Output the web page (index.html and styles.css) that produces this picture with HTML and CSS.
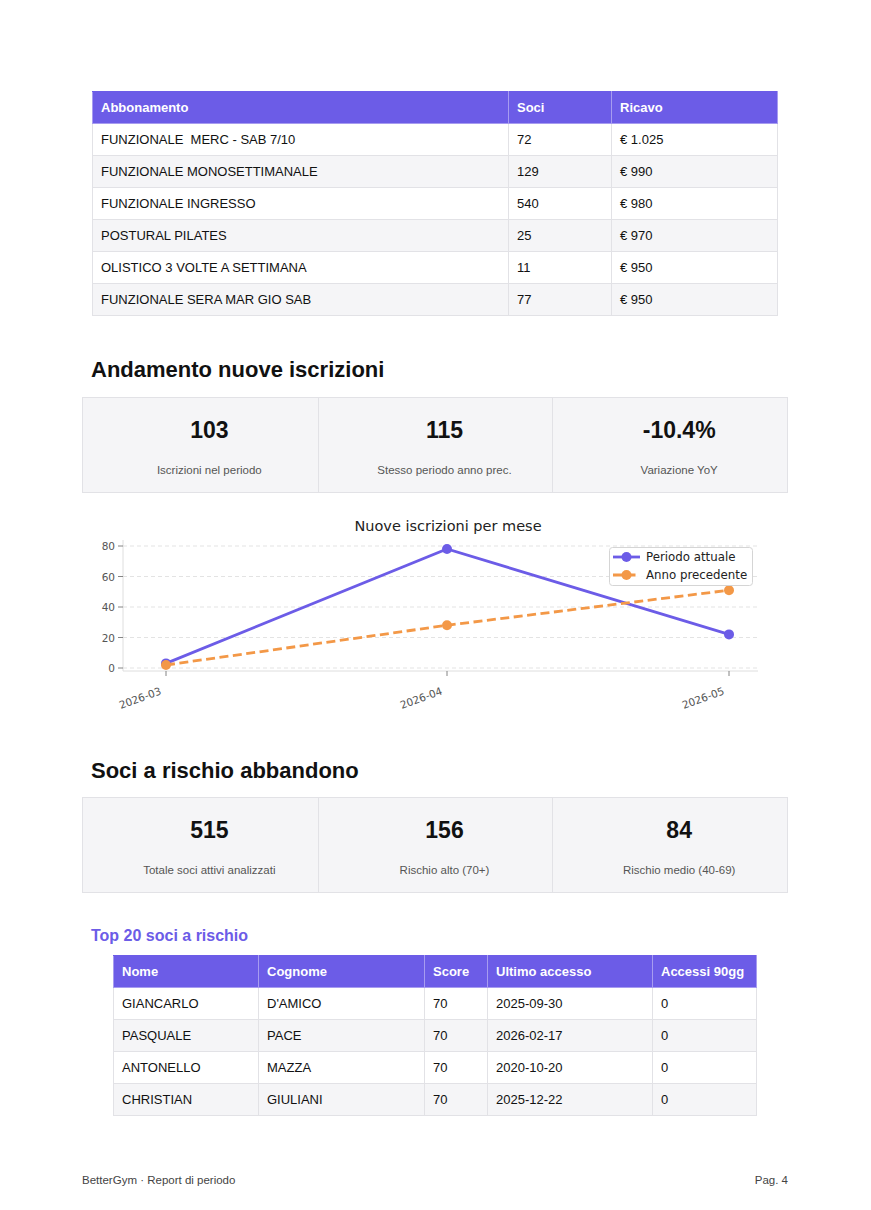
FILE: index.html
```html
<!DOCTYPE html>
<html lang="it">
<head>
<meta charset="utf-8">
<title>BetterGym - Report di periodo</title>
<link rel="stylesheet" href="styles.css">
</head>
<body>
<div class="page">
  <table class="data t1">
    <thead>
      <tr><th class="c-abb">Abbonamento</th><th class="c-soci">Soci</th><th>Ricavo</th></tr>
    </thead>
    <tbody>
      <tr><td>FUNZIONALE&nbsp; MERC - SAB 7/10</td><td>72</td><td>€ 1.025</td></tr>
      <tr><td>FUNZIONALE MONOSETTIMANALE</td><td>129</td><td>€ 990</td></tr>
      <tr><td>FUNZIONALE INGRESSO</td><td>540</td><td>€ 980</td></tr>
      <tr><td>POSTURAL PILATES</td><td>25</td><td>€ 970</td></tr>
      <tr><td>OLISTICO 3 VOLTE A SETTIMANA</td><td>11</td><td>€ 950</td></tr>
      <tr><td>FUNZIONALE SERA MAR GIO SAB</td><td>77</td><td>€ 950</td></tr>
    </tbody>
  </table>

  <h2 class="section-title first">Andamento nuove iscrizioni</h2>
  <div class="stats">
    <div class="stat"><div class="stat-value">103</div><div class="stat-label">Iscrizioni nel periodo</div></div>
    <div class="stat"><div class="stat-value">115</div><div class="stat-label">Stesso periodo anno prec.</div></div>
    <div class="stat"><div class="stat-value">-10.4%</div><div class="stat-label">Variazione YoY</div></div>
  </div>

  <svg class="chart" width="706" height="227" viewBox="82 503 706 227" xmlns="http://www.w3.org/2000/svg">
    <text x="448" y="531" class="ch-title" text-anchor="middle">Nuove iscrizioni per mese</text>
    <g class="grid">
      <line x1="123" y1="546" x2="758" y2="546"/>
      <line x1="123" y1="576.5" x2="758" y2="576.5"/>
      <line x1="123" y1="607" x2="758" y2="607"/>
      <line x1="123" y1="637.5" x2="758" y2="637.5"/>
      <line x1="123" y1="668" x2="758" y2="668"/>
    </g>
    <g class="spine">
      <line x1="123" y1="540" x2="123" y2="671"/>
      <line x1="123" y1="671" x2="758" y2="671"/>
    </g>
    <g class="ticks">
      <line x1="118" y1="546" x2="123" y2="546"/>
      <line x1="118" y1="576.5" x2="123" y2="576.5"/>
      <line x1="118" y1="607" x2="123" y2="607"/>
      <line x1="118" y1="637.5" x2="123" y2="637.5"/>
      <line x1="118" y1="668" x2="123" y2="668"/>
      <line x1="166" y1="671" x2="166" y2="676"/>
      <line x1="447" y1="671" x2="447" y2="676"/>
      <line x1="729" y1="671" x2="729" y2="676"/>
    </g>
    <g class="ytick" text-anchor="end">
      <text x="115" y="550">80</text>
      <text x="115" y="580.5">60</text>
      <text x="115" y="611">40</text>
      <text x="115" y="641.5">20</text>
      <text x="115" y="672">0</text>
    </g>
    <g class="xtick" text-anchor="end">
      <text transform="translate(162 694) rotate(-20)">2026-03</text>
      <text transform="translate(443 694) rotate(-20)">2026-04</text>
      <text transform="translate(725 694) rotate(-20)">2026-05</text>
    </g>
    <polyline class="l-cur" points="166,663.4 447,549 729,634.4"/>
    <g class="m-cur">
      <circle cx="166" cy="663.4" r="5"/>
      <circle cx="447" cy="549" r="5"/>
      <circle cx="729" cy="634.4" r="5"/>
    </g>
    <polyline class="l-prev" points="166,665 447,625.3 729,590.2"/>
    <g class="m-prev">
      <circle cx="166" cy="665" r="5"/>
      <circle cx="447" cy="625.3" r="5"/>
      <circle cx="729" cy="590.2" r="5"/>
    </g>
    <rect class="legend" x="609.5" y="547.5" width="143" height="38" rx="3"/>
    <line class="l-cur" x1="613" y1="557" x2="640" y2="557"/>
    <circle class="m-cur-one" cx="626.5" cy="557" r="5"/>
    <text class="lg" x="646" y="561">Periodo attuale</text>
    <line class="l-prev" x1="613" y1="575" x2="640" y2="575"/>
    <circle class="m-prev-one" cx="626.5" cy="575" r="5"/>
    <text class="lg" x="646" y="579">Anno precedente</text>
  </svg>

  <h2 class="section-title second">Soci a rischio abbandono</h2>
  <div class="stats">
    <div class="stat"><div class="stat-value">515</div><div class="stat-label">Totale soci attivi analizzati</div></div>
    <div class="stat"><div class="stat-value">156</div><div class="stat-label">Rischio alto (70+)</div></div>
    <div class="stat"><div class="stat-value">84</div><div class="stat-label">Rischio medio (40-69)</div></div>
  </div>

  <h3 class="sub-title">Top 20 soci a rischio</h3>
  <table class="data t2">
    <thead>
      <tr><th class="c-nome">Nome</th><th class="c-cog">Cognome</th><th class="c-score">Score</th><th class="c-ult">Ultimo accesso</th><th>Accessi 90gg</th></tr>
    </thead>
    <tbody>
      <tr><td>GIANCARLO</td><td>D'AMICO</td><td>70</td><td>2025-09-30</td><td>0</td></tr>
      <tr><td>PASQUALE</td><td>PACE</td><td>70</td><td>2026-02-17</td><td>0</td></tr>
      <tr><td>ANTONELLO</td><td>MAZZA</td><td>70</td><td>2020-10-20</td><td>0</td></tr>
      <tr><td>CHRISTIAN</td><td>GIULIANI</td><td>70</td><td>2025-12-22</td><td>0</td></tr>
    </tbody>
  </table>

  <footer class="footer">
    <span>BetterGym · Report di periodo</span>
    <span>Pag. 4</span>
  </footer>
</div>
</body>
</html>
```

FILE: styles.css
```css
* { box-sizing: border-box; }
html, body { margin: 0; padding: 0; background: #fff; }
body {
  font-family: "Liberation Sans", Arial, Helvetica, sans-serif;
  color: #111;
}
.page {
  width: 871px;
  padding: 91px 83px 0 82px;
  display: flex;
  flex-direction: column;
}
.data {
  border-collapse: collapse;
  align-self: center;
  font-size: 13px;
  table-layout: fixed;
}
.data th, .data td {
  text-align: left;
  padding: 8px 8px 8px 8px;
  line-height: 15px;
  border: 1px solid #e2e2e6;
  white-space: nowrap;
}
.data th {
  background: #6c5ce7;
  color: #fff;
  font-weight: bold;
  border-color: #a79cf0;
  border-top-color: #6c5ce7;
}
.data tbody tr:nth-child(even) td { background: #f5f5f7; }
.t1 { width: 686px; }
.t1 .c-abb { width: 416px; }
.t1 .c-soci { width: 103px; }
.t2 { width: 644px; }
.t2 .c-nome { width: 145px; }
.t2 .c-cog { width: 166px; }
.t2 .c-score { width: 63px; }
.t2 .c-ult { width: 165px; }

.section-title {
  font-size: 22px;
  line-height: 24px;
  font-weight: bold;
  margin: 0 0 15px 9px;
  color: #111;
}
.section-title.first { margin-top: 42px; }
.section-title.second { margin-top: 29px; margin-bottom: 14px; }

.stats {
  display: grid;
  grid-template-columns: 1fr 1fr 1fr;
  background: #f5f5f7;
  border: 1px solid #e2e2e6;
}
.stat {
  height: 94px;
  text-align: center;
  border-left: 1px solid #e2e2e6;
  padding: 19px 0 0 18px;
}
.stat:first-child { border-left: none; }
.stat-value {
  font-size: 23px;
  line-height: 26px;
  font-weight: bold;
  color: #111;
}
.stat-label {
  margin-top: 20px;
  font-size: 11.5px;
  line-height: 14px;
  color: #555;
}

.chart { display: block; margin-top: 10px; }
.ch-title { font-family: "DejaVu Sans", sans-serif; font-size: 14.5px; fill: #222; }
.grid line { stroke: #dcdcdc; stroke-width: 0.8; stroke-dasharray: 4 3; }
.spine line { stroke: #dedede; stroke-width: 1; }
.ticks line { stroke: #666; stroke-width: 0.8; }
.ytick text, .xtick text { font-family: "DejaVu Sans", sans-serif; font-size: 10.5px; fill: #555; }
.l-cur { fill: none; stroke: #6c5ce7; stroke-width: 2.8; }
.l-prev { fill: none; stroke: #f39847; stroke-width: 2.8; stroke-dasharray: 9 4.5; }
.m-cur circle, .m-cur-one { fill: #6c5ce7; }
.m-prev circle, .m-prev-one { fill: #f39847; }
.legend { fill: #fff; fill-opacity: 0.85; stroke: #d5d5d5; stroke-width: 1; }
.lg { font-family: "DejaVu Sans", sans-serif; font-size: 11.8px; fill: #222; }

.sub-title {
  margin: 34px 0 10px 9px;
  font-size: 16px;
  line-height: 18px;
  font-weight: bold;
  color: #6c5ce7;
}

.footer {
  margin-top: 57px;
  display: flex;
  justify-content: space-between;
  font-size: 11.5px;
  line-height: 14px;
  color: #444;
}
```
